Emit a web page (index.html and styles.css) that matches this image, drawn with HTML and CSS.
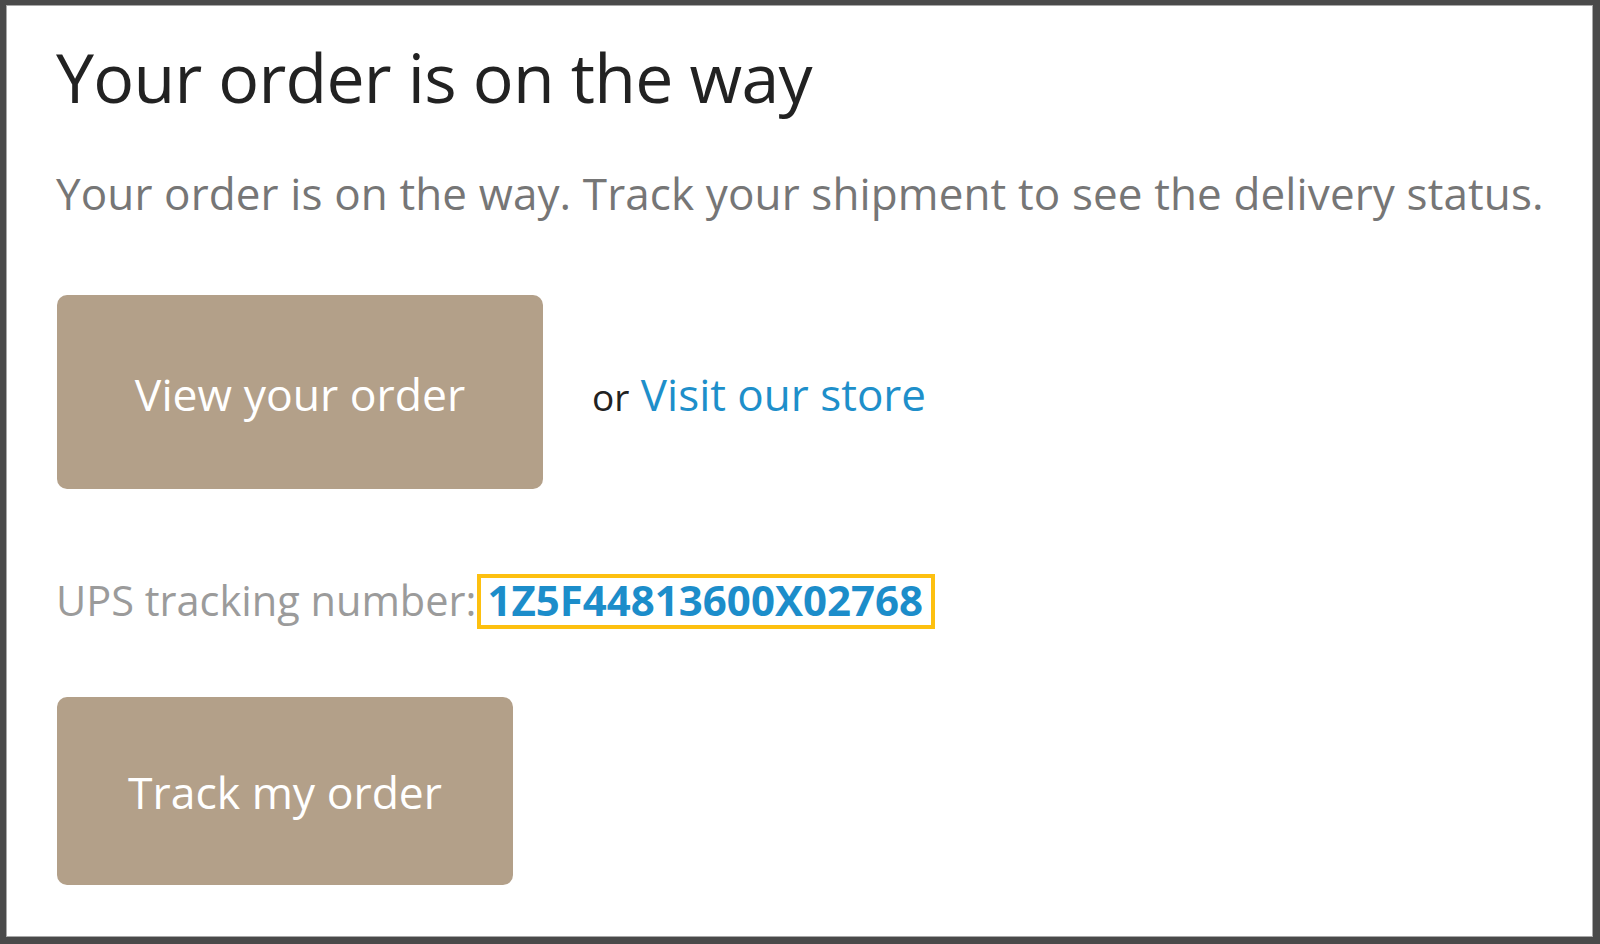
FILE: index.html
```html
<!DOCTYPE html>
<html lang="en">
<head>
<meta charset="utf-8">
<title>Your order is on the way</title>
<link rel="stylesheet" href="styles.css">
</head>
<body>
<div class="frame">
  <h1 class="title">Your order is on the way</h1>
  <p class="lead">Your order is on the way. Track your shipment to see the delivery status.</p>
  <div class="actions">
    <a class="btn btn-view" href="#">View your order</a>
    <span class="alt"><span class="or">or</span> <a class="link" href="#">Visit our store</a></span>
  </div>
  <div class="tracking">
    <span class="tracking-label">UPS tracking number:</span><a class="tracking-number" href="#">1Z5F44813600X02768</a>
  </div>
  <a class="btn btn-track" href="#">Track my order</a>
</div>
</body>
</html>
```
FILE: styles.css
```css
html, body {
  margin: 0;
  padding: 0;
  height: 100%;
  background: #ffffff;
}

.frame {
  box-sizing: border-box;
  height: 944px;
  border-style: solid;
  border-color: #4a4a4a;
  border-width: 5px 7px 7px 6px;
  box-shadow: inset 0 0 0 1px #a8a8a8;
  padding: 32px 0 0 50px;
  font-family: "Open Sans", "Noto Sans", sans-serif;
  display: flex;
  flex-direction: column;
  align-items: flex-start;
}

.title {
  margin: 0;
  font-size: 68px;
  line-height: 80px;
  font-weight: 400;
  letter-spacing: -0.75px;
  color: #222222;
}

.lead {
  margin: 50px 0 0 0;
  font-size: 44px;
  line-height: 52px;
  color: #767676;
  letter-spacing: 0.12px;
}

.actions {
  margin-top: 76px;
  display: flex;
  align-items: center;
}

.btn {
  box-sizing: border-box;
  display: flex;
  align-items: center;
  justify-content: center;
  background: #b3a089;
  color: #ffffff;
  text-decoration: none;
  font-size: 44.5px;
  line-height: 52px;
  border-radius: 10px;
  margin-left: 1px;
}

.btn-view {
  width: 486px;
  height: 194px;
  padding-top: 3px;
}

.btn-track {
  margin-top: 68px;
  width: 456px;
  height: 188px;
  padding-top: 2px;
}

.alt {
  margin-left: 49px;
  padding-top: 6px;
  font-size: 44px;
  line-height: 52px;
}

.or {
  font-size: 37px;
  color: #222222;
}

.link {
  font-size: 44px;
  color: #1e8fca;
  text-decoration: none;
}

.tracking {
  margin-top: 85px;
  display: flex;
  align-items: baseline;
}

.tracking-label {
  font-size: 41.5px;
  line-height: 47px;
  color: #9b9b9b;
}

.tracking-number {
  margin-left: 1px;
  border: 4px solid #fdc010;
  padding: 0 8px 3px 6px;
  font-size: 42px;
  line-height: 44px;
  font-weight: 700;
  color: #1c8dca;
  text-decoration: none;
}
```
